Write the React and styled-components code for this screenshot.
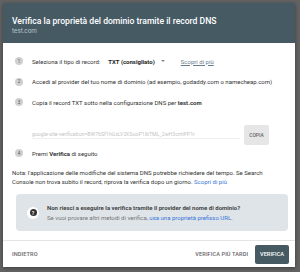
import styled, { createGlobalStyle } from "styled-components";

const GlobalStyle = createGlobalStyle`
  body {
    margin: 0;
    background: #636363;
    font-family: Roboto, "Liberation Sans", sans-serif;
  }
`;

const Backdrop = styled.div`
  width: 300px;
  height: 272px;
  padding: 3px 0 0 3px;
  box-sizing: border-box;
`;

const Dialog = styled.div`
  width: 292px;
  height: 264px;
  background: #fff;
  display: flex;
  flex-direction: column;
  box-shadow: 0 1px 4px rgba(0, 0, 0, 0.4);
`;

const Header = styled.div`
  background: #465a64;
  height: 40px;
  padding: 13px 0 0 9px;
  box-sizing: border-box;
  flex-shrink: 0;
`;

const Title = styled.div`
  color: #fff;
  font-size: 8.6px;
  font-weight: 500;
  line-height: 10px;
`;

const Subtitle = styled.div`
  color: #b8c2c7;
  font-size: 6.3px;
  line-height: 10px;
`;

const Body = styled.div`
  padding: 11px 10px 0 9px;
  flex: 1;
  display: flex;
  flex-direction: column;
`;

const Step = styled.div`
  display: flex;
  align-items: center;
  height: 14px;
  flex-shrink: 0;
  margin-bottom: ${(p) => p.gap ?? 6.5}px;
  font-size: 6px;
  color: #333;
  white-space: nowrap;
`;

const Num = styled.span`
  width: 8px;
  height: 8px;
  border-radius: 50%;
  background: #d0d0d0;
  color: #555;
  font-size: 4.5px;
  display: flex;
  align-items: center;
  justify-content: center;
  margin: 0 9px 0 3px;
  flex-shrink: 0;
`;

const Select = styled.span`
  font-weight: 700;
  margin-left: 8px;
  display: flex;
  align-items: center;
  gap: 6px;
  color: #222;
`;

const Caret = styled.span`
  width: 0;
  height: 0;
  border-left: 2px solid transparent;
  border-right: 2px solid transparent;
  border-top: 2px solid #888;
`;

const UnderLink = styled.a`
  margin-left: 16px;
  color: #6b7b91;
  text-decoration: underline;
`;

const CodeRow = styled.div`
  display: flex;
  align-items: center;
  margin: 16px 0 1px 20px;
  flex-shrink: 0;
`;

const Code = styled.div`
  flex: 1;
  color: #c4c4c4;
  font-size: 5.2px;
  white-space: nowrap;
  overflow: hidden;
  border-bottom: 1px solid #eee;
  padding-bottom: 1px;
  margin-right: 4px;
`;

const CopyBtn = styled.div`
  width: 25px;
  height: 20px;
  background: #e6e6e6;
  color: #666;
  font-size: 5px;
  font-weight: 500;
  display: flex;
  align-items: center;
  justify-content: center;
  border-radius: 2px;
  margin-right: 16px;
`;

const Note = styled.p`
  margin: 8px 0 0;
  font-size: 6px;
  line-height: 9px;
  color: #333;
`;

const Link = styled.a`
  color: #3a74d9;
`;

const InfoBox = styled.div`
  margin: 8px 0 0 4px;
  width: 272px;
  height: 37px;
  flex-shrink: 0;
  background: #dee4e8;
  border-radius: 4px;
  display: flex;
  align-items: center;
  box-sizing: border-box;
  padding-left: 11px;
`;

const QIcon = styled.div`
  width: 12px;
  height: 12px;
  border-radius: 50%;
  background: #fff;
  display: flex;
  align-items: center;
  justify-content: center;
  margin-right: 8px;
  flex-shrink: 0;
`;

const QInner = styled.div`
  width: 7px;
  height: 7px;
  border-radius: 50%;
  background: #333;
  color: #fff;
  font-size: 5px;
  font-weight: 700;
  display: flex;
  align-items: center;
  justify-content: center;
`;

const InfoText = styled.div`
  font-size: 6px;
  line-height: 10px;
  color: #777;
  white-space: nowrap;
`;

const InfoTitle = styled.div`
  font-weight: 700;
  color: #444;
`;

const Footer = styled.div`
  border-top: 1px solid #e4e4e4;
  height: 26px;
  flex-shrink: 0;
  display: flex;
  align-items: center;
  padding: 0 6px 0 9px;
`;

const TextBtn = styled.span`
  font-size: 5.6px;
  font-weight: 500;
  color: #666;
  letter-spacing: 0.1px;
`;

const Spacer = styled.div`
  flex: 1;
`;

const PrimaryBtn = styled.div`
  background: #465a64;
  color: #fff;
  font-size: 5.6px;
  font-weight: 500;
  height: 19px;
  padding: 0 5px;
  margin-left: 7px;
  display: flex;
  align-items: center;
  border-radius: 2px;
`;

export default function App() {
  return (
    <>
      <GlobalStyle />
      <Backdrop>
        <Dialog>
          <Header>
            <Title>Verifica la proprietà del dominio tramite il record DNS</Title>
            <Subtitle>test.com</Subtitle>
          </Header>
          <Body>
            <Step>
              <Num>1</Num>
              Seleziona il tipo di record:
              <Select>
                TXT (consigliato) <Caret />
              </Select>
              <UnderLink>Scopri di più</UnderLink>
            </Step>
            <Step>
              <Num>2</Num>
              Accedi al provider del tuo nome di dominio (ad esempio, godaddy.com o namecheap.com)
            </Step>
            <Step gap={0}>
              <Num>3</Num>
              Copia il record TXT sotto nella configurazione DNS per&nbsp;<b>test.com</b>
            </Step>
            <CodeRow>
              <Code>google-site-verification=BW76Sf1hGzLV2KSuoP1IbTML_2wH3cnhPP1r</Code>
              <CopyBtn>COPIA</CopyBtn>
            </CodeRow>
            <Step gap={0}>
              <Num>4</Num>
              Premi&nbsp;<b>Verifica</b>&nbsp;di seguito
            </Step>
            <Note>
              Nota: l'applicazione delle modifiche del sistema DNS potrebbe richiedere del tempo. Se Search
              Console non trova subito il record, riprova la verifica dopo un giorno. <Link>Scopri di più</Link>
            </Note>
            <InfoBox>
              <QIcon>
                <QInner>?</QInner>
              </QIcon>
              <InfoText>
                <InfoTitle>Non riesci a eseguire la verifica tramite il provider del nome di dominio?</InfoTitle>
                Se vuoi provare altri metodi di verifica, <Link>usa una proprietà prefisso URL</Link>.
              </InfoText>
            </InfoBox>
            <Spacer />
          </Body>
          <Footer>
            <TextBtn>INDIETRO</TextBtn>
            <Spacer />
            <TextBtn>VERIFICA PIÙ TARDI</TextBtn>
            <PrimaryBtn>VERIFICA</PrimaryBtn>
          </Footer>
        </Dialog>
      </Backdrop>
    </>
  );
}
